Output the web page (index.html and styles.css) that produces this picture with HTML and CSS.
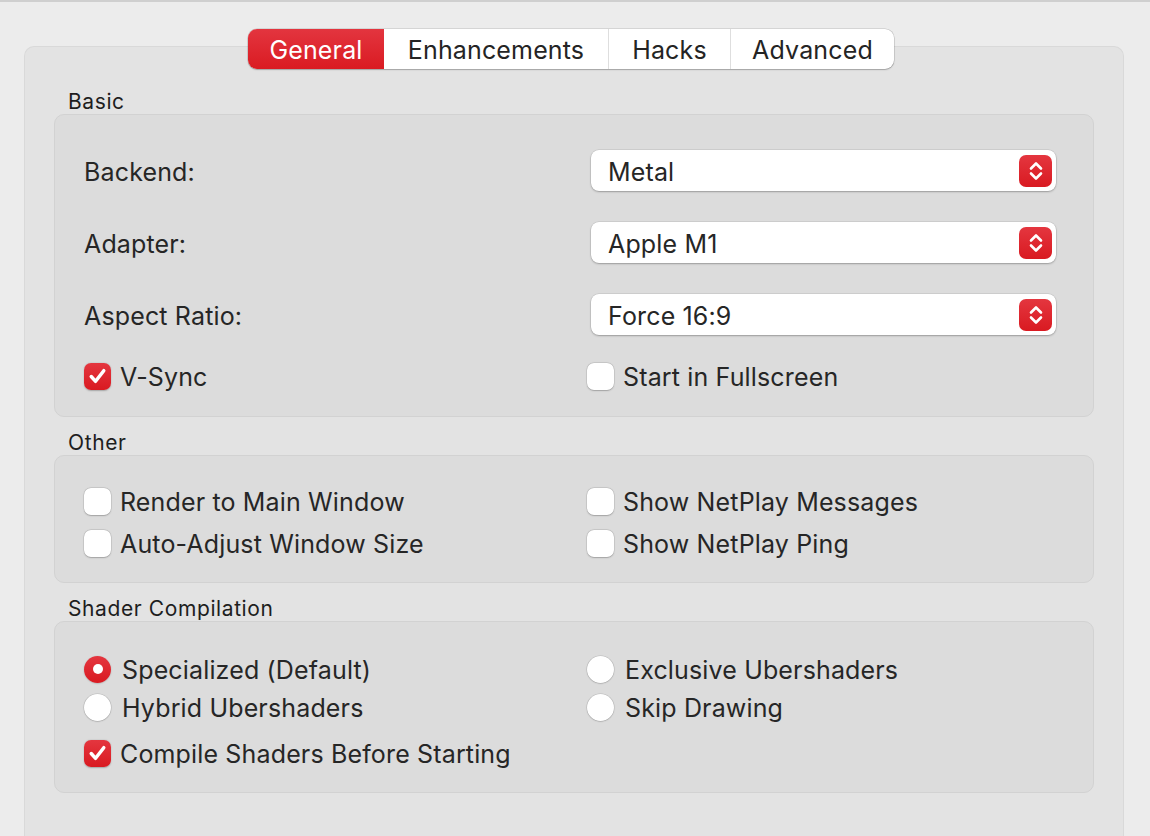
FILE: index.html
```html
<!DOCTYPE html>
<html>
<head>
<meta charset="utf-8">
<link rel="stylesheet" href="styles.css">
</head>
<body>
<div class="window">
  <div class="tabbar">
    <div class="tabs">
      <div class="tab active">General</div>
      <div class="tab">Enhancements</div>
      <div class="tab">Hacks</div>
      <div class="tab">Advanced</div>
    </div>
  </div>
  <div class="pane">
    <div class="section-title">Basic</div>
    <div class="group basic">
      <div class="field">
        <span class="field-label">Backend:</span>
        <div class="popup"><span class="popup-value">Metal</span><span class="stepper"><svg viewBox="0 0 32 32" width="32" height="32"><path d="M11 13.5 L16 8.5 L21 13.5 M11 18.5 L16 23.5 L21 18.5" fill="none" stroke="#fff" stroke-width="2.6" stroke-linecap="round" stroke-linejoin="round"/></svg></span></div>
      </div>
      <div class="field">
        <span class="field-label">Adapter:</span>
        <div class="popup"><span class="popup-value">Apple M1</span><span class="stepper"><svg viewBox="0 0 32 32" width="32" height="32"><path d="M11 13.5 L16 8.5 L21 13.5 M11 18.5 L16 23.5 L21 18.5" fill="none" stroke="#fff" stroke-width="2.6" stroke-linecap="round" stroke-linejoin="round"/></svg></span></div>
      </div>
      <div class="field">
        <span class="field-label">Aspect Ratio:</span>
        <div class="popup"><span class="popup-value">Force 16:9</span><span class="stepper"><svg viewBox="0 0 32 32" width="32" height="32"><path d="M11 13.5 L16 8.5 L21 13.5 M11 18.5 L16 23.5 L21 18.5" fill="none" stroke="#fff" stroke-width="2.6" stroke-linecap="round" stroke-linejoin="round"/></svg></span></div>
      </div>
      <div class="grid2 checks">
        <label class="opt"><span class="cb on"><svg viewBox="0 0 28 28" width="28" height="28"><path d="M7.5 14.5 L12 19.5 L20.5 8.5" fill="none" stroke="#fff" stroke-width="3.6" stroke-linecap="round" stroke-linejoin="round"/></svg></span><span class="opt-text">V-Sync</span></label>
        <label class="opt"><span class="cb"></span><span class="opt-text">Start in Fullscreen</span></label>
      </div>
    </div>

    <div class="section-title">Other</div>
    <div class="group other">
      <div class="grid2 rows">
        <label class="opt"><span class="cb"></span><span class="opt-text">Render to Main Window</span></label>
        <label class="opt"><span class="cb"></span><span class="opt-text">Show NetPlay Messages</span></label>
        <label class="opt"><span class="cb"></span><span class="opt-text">Auto-Adjust Window Size</span></label>
        <label class="opt"><span class="cb"></span><span class="opt-text">Show NetPlay Ping</span></label>
      </div>
    </div>

    <div class="section-title">Shader Compilation</div>
    <div class="group shader">
      <div class="grid2 radios">
        <label class="opt"><span class="rb on"></span><span class="opt-text">Specialized (Default)</span></label>
        <label class="opt"><span class="rb"></span><span class="opt-text">Exclusive Ubershaders</span></label>
        <label class="opt"><span class="rb"></span><span class="opt-text">Hybrid Ubershaders</span></label>
        <label class="opt"><span class="rb"></span><span class="opt-text">Skip Drawing</span></label>
      </div>
      <label class="opt compile"><span class="cb on"><svg viewBox="0 0 28 28" width="28" height="28"><path d="M7.5 14.5 L12 19.5 L20.5 8.5" fill="none" stroke="#fff" stroke-width="3.6" stroke-linecap="round" stroke-linejoin="round"/></svg></span><span class="opt-text">Compile Shaders Before Starting</span></label>
    </div>
  </div>
</div>
</body>
</html>
```
FILE: styles.css
```css
html, body {
  margin: 0;
  padding: 0;
  height: 100%;
  overflow: hidden;
}
body {
  background: #ececec;
  border-top: 2px solid #cfcfcf;
  font-family: Inter, "Noto Sans", sans-serif;
  color: #262626;
  box-sizing: border-box;
}
.window {
  padding: 27px 26px 0 24px;
}
.tabbar {
  display: flex;
  justify-content: center;
  position: relative;
  z-index: 2;
  height: 40px;
  padding-right: 6px;
}
.tabs {
  display: flex;
  height: 40px;
  background: #fff;
  border-radius: 9px;
  box-shadow: 0 0 0 0.5px rgba(0,0,0,0.18), 0 1px 1.5px rgba(0,0,0,0.22);
}
.tab {
  font-size: 25px;
  letter-spacing: 0.15px;
  line-height: 42px;
  padding: 0;
  color: #242424;
  border-left: 1.5px solid #dedede;
  text-align: center;
}
.tab.active {
  background: linear-gradient(#e3353f, #da1b22);
  color: #fff;
  border-radius: 9px 0 0 9px;
  border-left: none;
  width: 136px;
}
.tab:nth-child(2) { width: 224px; border-left: none; }
.tab:nth-child(3) { width: 121px; }
.tab:nth-child(4) { width: 163px; }
.pane {
  margin-top: -23px;
  height: 792px;
  box-sizing: border-box;
  background: #e3e3e3;
  border: 1px solid #d9d9d9;
  border-bottom: none;
  border-radius: 10px 10px 0 0;
  padding: 41px 29px 0 29px;
}
.section-title {
  font-size: 21px;
  letter-spacing: 0.6px;
  line-height: 26px;
  padding-left: 14px;
  padding-top: 1px;
  margin-bottom: -1px;
  color: #1e1e1e;
}
.group {
  background: #dcdcdc;
  border: 1px solid #d2d2d2;
  border-radius: 10px;
  margin-bottom: 12px;
  padding-left: 29px;
  padding-right: 37px;
}
.basic { padding-top: 35px; padding-bottom: 26px; }
.field {
  display: flex;
  align-items: center;
  justify-content: space-between;
  height: 41px;
  margin-bottom: 31px;
}
.field:nth-child(3) { margin-bottom: 27px; }
.field-label {
  font-size: 25px;
  letter-spacing: 0.15px;
  padding-top: 3px;
}
.popup {
  width: 465px;
  height: 41px;
  box-sizing: border-box;
  background: #fff;
  border-radius: 8px;
  box-shadow: 0 0 0 0.5px rgba(0,0,0,0.12), 0 1px 2px rgba(0,0,0,0.25);
  display: flex;
  align-items: center;
  justify-content: space-between;
  padding: 0 4px 0 17px;
  font-size: 25px;
  letter-spacing: 0.15px;
}
.popup-value { padding-top: 2px; }
.stepper {
  width: 33px;
  height: 32px;
  border-radius: 7px;
  background: linear-gradient(#e4363f, #d91a21);
  display: flex;
  align-items: center;
  justify-content: center;
}
.stepper svg { display: block; }
.grid2 {
  display: grid;
  grid-template-columns: 503px 1fr;
}
.opt {
  display: flex;
  align-items: center;
  font-size: 25px;
  letter-spacing: 0.15px;
  height: 28px;
  white-space: nowrap;
}
.opt-text { padding-top: 2px; }
.cb, .rb {
  width: 27px;
  height: 27px;
  flex: none;
  box-sizing: border-box;
  background: #fff;
  box-shadow: 0 0 0 0.5px rgba(0,0,0,0.12), 0 0.5px 1.5px rgba(0,0,0,0.22);
  margin-right: 9px;
  display: flex;
  align-items: center;
  justify-content: center;
}
.cb { border-radius: 7px; }
.cb svg { display: block; }
.cb.on {
  background: linear-gradient(#e4363f, #d91a21);
  box-shadow: 0 0.5px 1.5px rgba(0,0,0,0.25);
}
.rb {
  border-radius: 50%;
  margin-right: 11px;
}
.rb.on {
  background: linear-gradient(#e4363f, #d91a21);
  box-shadow: 0 0.5px 1.5px rgba(0,0,0,0.25);
}
.rb.on::after {
  content: "";
  width: 10px;
  height: 10px;
  border-radius: 50%;
  background: #fff;
}
.other { padding-top: 31px; padding-bottom: 25px; }
.rows { row-gap: 14px; }
.shader { padding-top: 33px; padding-bottom: 25px; }
.radios { row-gap: 10px; }
.compile { margin-top: 18px; }
```
